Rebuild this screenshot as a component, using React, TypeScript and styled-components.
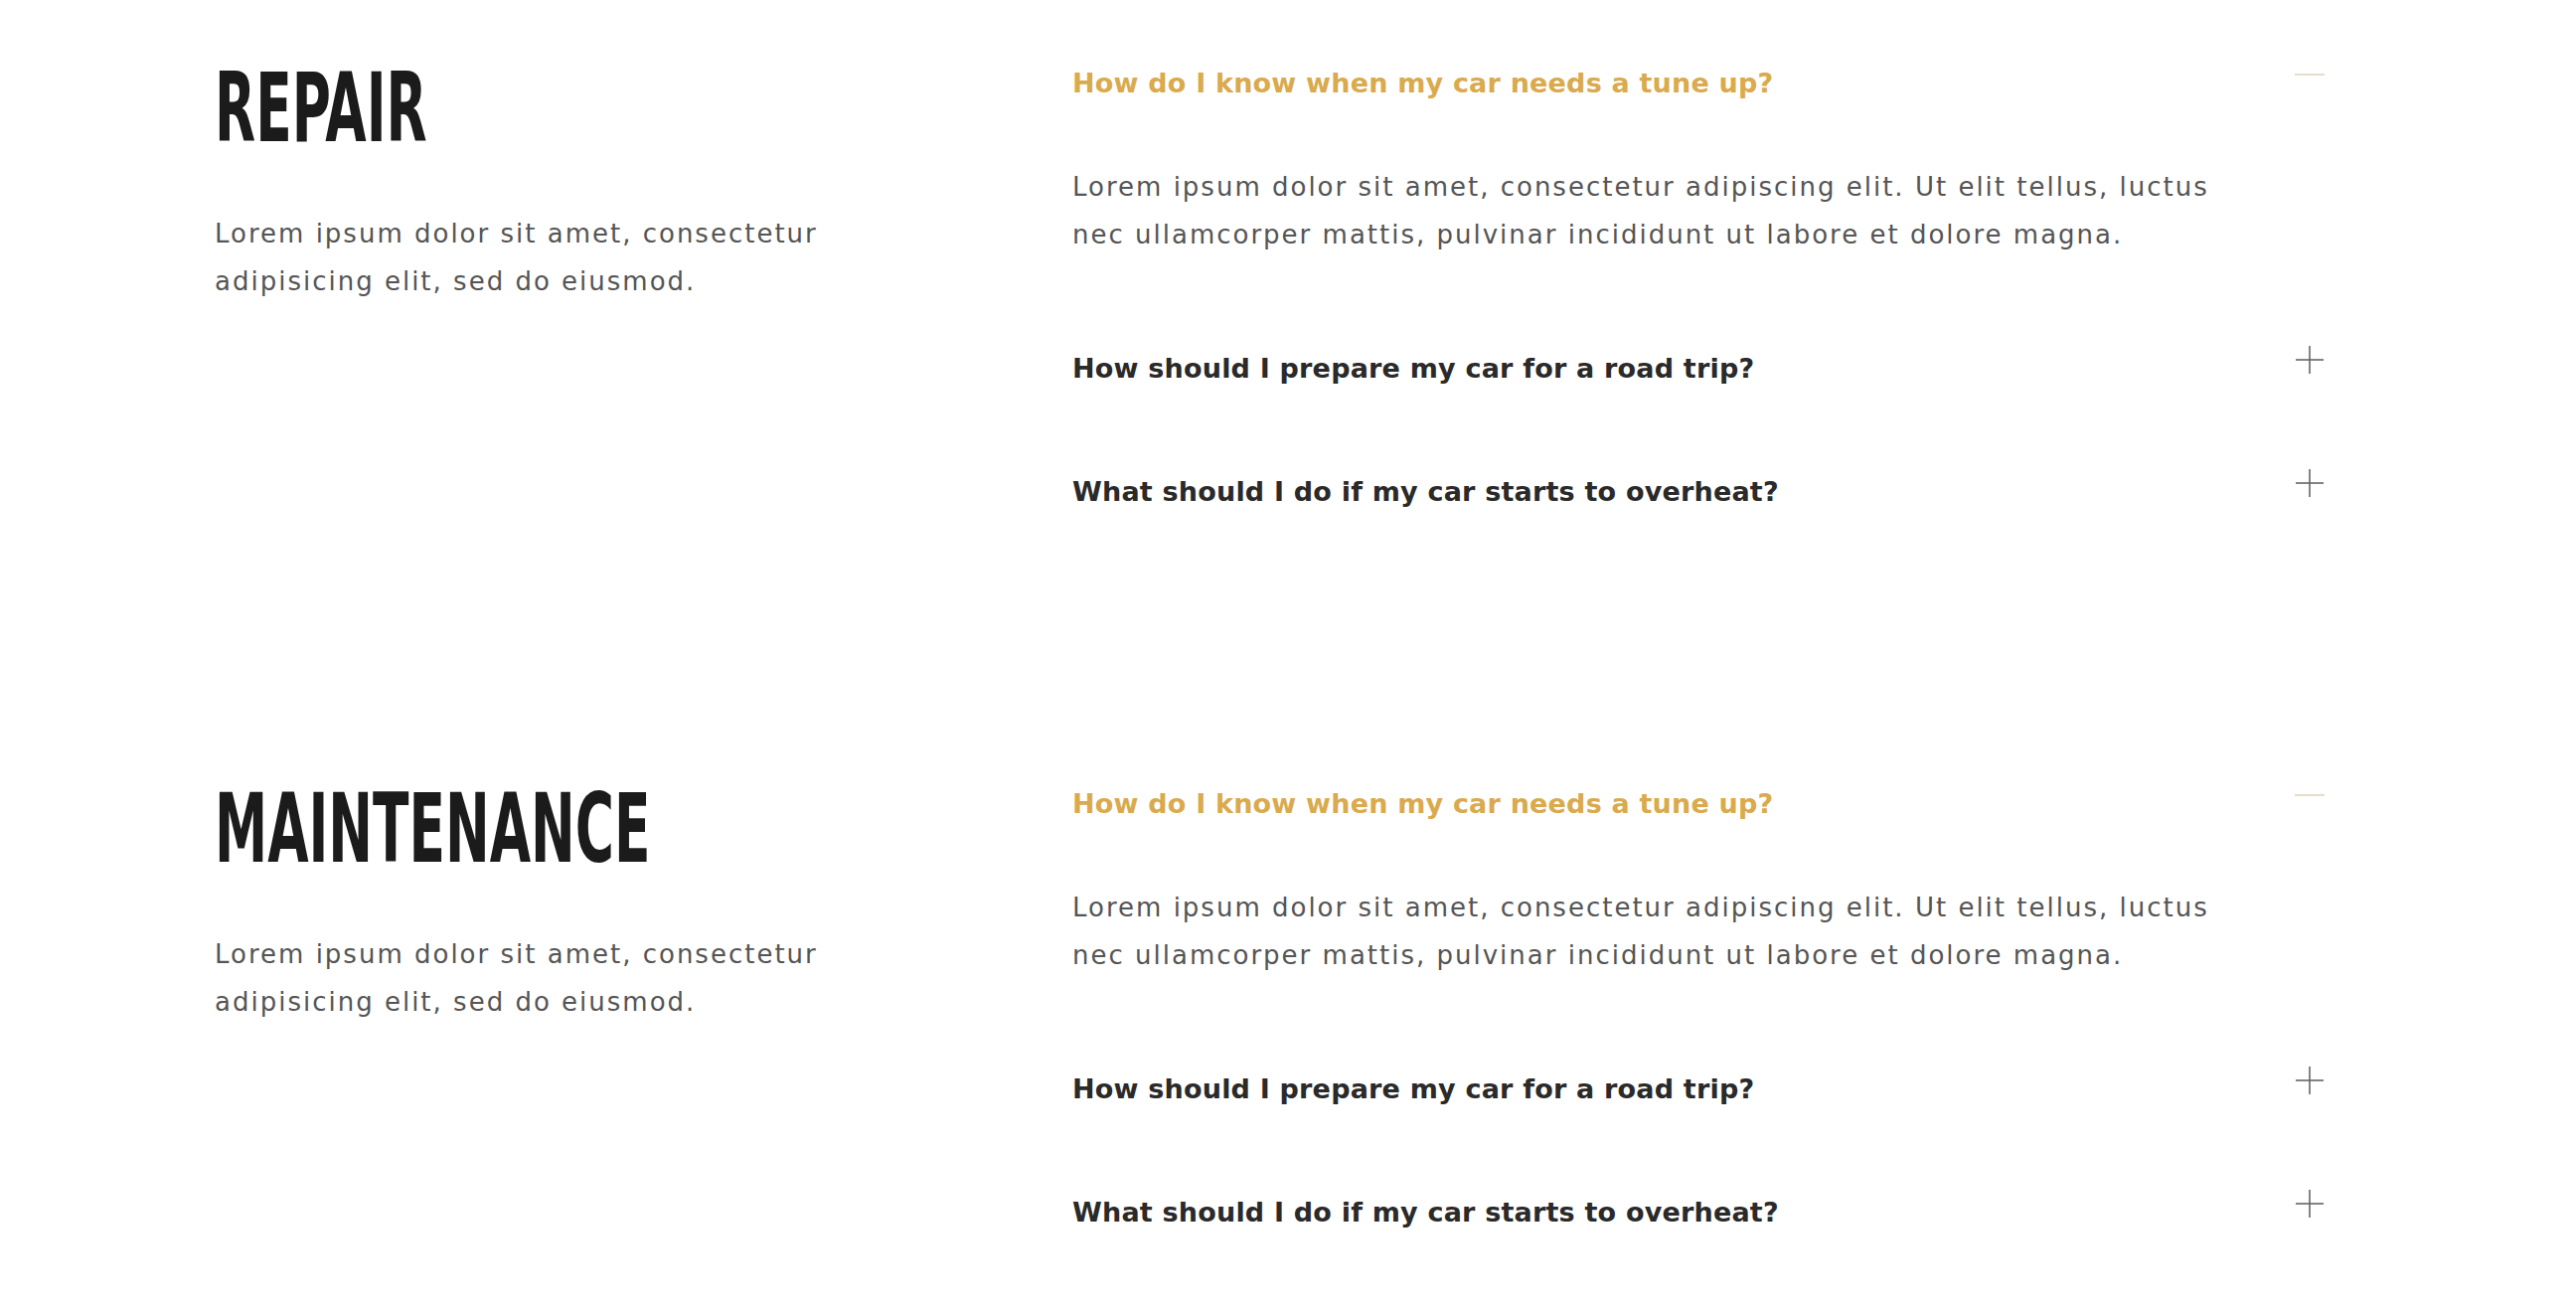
import React from 'react'
import styled, { createGlobalStyle } from 'styled-components'

const GlobalStyle = createGlobalStyle`
  html, body {
    margin: 0;
    padding: 0;
    background: #ffffff;
  }
  body {
    font-family: "DejaVu Sans", "Liberation Sans", sans-serif;
  }
`

const faqs = [
  {
    q: 'How do I know when my car needs a tune up?',
    a: 'Lorem ipsum dolor sit amet, consectetur adipiscing elit. Ut elit tellus, luctus nec ullamcorper mattis, pulvinar incididunt ut labore et dolore magna.',
  },
  {
    q: 'How should I prepare my car for a road trip?',
    a: 'Lorem ipsum dolor sit amet, consectetur adipiscing elit. Ut elit tellus, luctus nec ullamcorper mattis, pulvinar incididunt ut labore et dolore magna.',
  },
  {
    q: 'What should I do if my car starts to overheat?',
    a: 'Lorem ipsum dolor sit amet, consectetur adipiscing elit. Ut elit tellus, luctus nec ullamcorper mattis, pulvinar incididunt ut labore et dolore magna.',
  },
]

const sections = [
  { title: 'REPAIR', text: 'Lorem ipsum dolor sit amet, consectetur adipisicing elit, sed do eiusmod.' },
  { title: 'MAINTENANCE', text: 'Lorem ipsum dolor sit amet, consectetur adipisicing elit, sed do eiusmod.' },
]

export default function App() {
  return (
    <Page>
      <GlobalStyle />
      {sections.map((s) => (
        <Section key={s.title}>
          <Intro>
            <Title>{s.title}</Title>
            <Lead>{s.text}</Lead>
          </Intro>
          <Faq>
            {faqs.map((f, i) => (
              <Item key={f.q}>
                <Header>
                  <Question $open={i === 0}>{f.q}</Question>
                  <Toggle>
                    {i === 0 ? (
                      <svg width="34" height="30" viewBox="0 0 34 30">
                        <line x1="0" y1="15" x2="34" y2="15" stroke="#e3d8c2" strokeWidth="2" />
                      </svg>
                    ) : (
                      <svg width="30" height="30" viewBox="0 0 30 30">
                        <line x1="1" y1="15" x2="29" y2="15" stroke="#666666" strokeWidth="1.6" />
                        <line x1="15" y1="1" x2="15" y2="29" stroke="#666666" strokeWidth="1.6" />
                      </svg>
                    )}
                  </Toggle>
                </Header>
                {i === 0 && <Answer>{f.a}</Answer>}
              </Item>
            ))}
          </Faq>
        </Section>
      ))}
    </Page>
  )
}

const Page = styled.div`
  display: flex;
  flex-direction: column;
  gap: 190px;
  padding: 22px 0 0 216px;
  height: 1320px;
  box-sizing: border-box;
  overflow: hidden;
`

const Section = styled.section`
  display: grid;
  grid-template-columns: 863px 1260px;
`

const Intro = styled.div`
  display: flex;
  flex-direction: column;
  align-items: flex-start;
  padding-top: 38px;
`

const Title = styled.h2`
  margin: 0;
  font-family: "DejaVu Sans Condensed", "DejaVu Sans", sans-serif;
  font-weight: 700;
  font-size: 97px;
  line-height: 1;
  color: #1b1b1b;
  transform: scaleX(0.612);
  transform-origin: left center;
  white-space: nowrap;
`

const Lead = styled.p`
  margin: 54px 0 0;
  max-width: 660px;
  font-size: 26px;
  line-height: 48px;
  letter-spacing: 2px;
  color: #555555;
`

const Faq = styled.div`
  display: flex;
  flex-direction: column;
`

const Item = styled.div`
  display: flex;
  flex-direction: column;
`

const Header = styled.div`
  display: flex;
  justify-content: space-between;
  align-items: flex-start;
  padding: 44px 0;
`

const Question = styled.h3<{ $open: boolean }>`
  margin: 0;
  font-size: 27px;
  font-weight: 700;
  line-height: 36px;
  letter-spacing: 0.2px;
  color: ${(p) => (p.$open ? '#d9aa4e' : '#2a2a2a')};
`

const Toggle = styled.span`
  display: flex;
  align-items: center;
  justify-content: center;
  width: 30px;
  height: 30px;
  margin-top: -6px;
`

const Answer = styled.p`
  margin: 0;
  padding: 18px 0 49px;
  max-width: 1175px;
  font-size: 26px;
  line-height: 48px;
  letter-spacing: 2px;
  color: #555555;
`
